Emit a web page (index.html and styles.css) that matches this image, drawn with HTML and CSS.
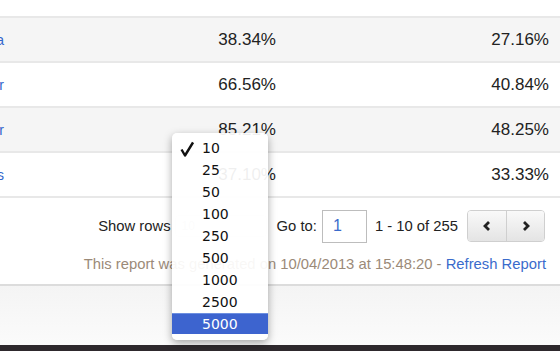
FILE: index.html
```html
<!DOCTYPE html>
<html lang="en">
<head>
    <meta charset="UTF-8">
    <title>Report</title>
    <link rel="stylesheet" href="styles.css">
</head>
<body>
    <div class="report">
        <div class="grid">
            <div class="row">
                <div class="name"><a href="#">Total</a></div>
                <div class="num">52.18%</div>
                <div class="num">31.07%</div>
            </div>
            <div class="row odd">
                <div class="name"><a href="#">Social Media</a></div>
                <div class="num">38.34%</div>
                <div class="num">27.16%</div>
            </div>
            <div class="row">
                <div class="name"><a href="#">Referrer</a></div>
                <div class="num">66.56%</div>
                <div class="num">40.84%</div>
            </div>
            <div class="row odd">
                <div class="name"><a href="#">Other</a></div>
                <div class="num">85.21%</div>
                <div class="num">48.25%</div>
            </div>
            <div class="row">
                <div class="name"><a href="#">Links</a></div>
                <div class="num">37.10%</div>
                <div class="num">33.33%</div>
            </div>
        </div>

        <div class="footer">
            <div class="controls">
                <span>Show rows</span>
                <span class="select">10</span>
                <span class="goto">Go to:</span>
                <input class="page-input" type="text" value="1">
                <span class="range">1 - 10 of 255</span>
                <div class="pager">
                    <button class="pager-btn"><svg width="10" height="12" viewBox="0 0 10 12"><polyline points="7,2 3,6 7,10" fill="none" stroke="#222" stroke-width="2.8"/></svg></button>
                    <button class="pager-btn"><svg width="10" height="12" viewBox="0 0 10 12"><polyline points="3,2 7,6 3,10" fill="none" stroke="#222" stroke-width="2.8"/></svg></button>
                </div>
            </div>
            <div class="generated">This report was generated on 10/04/2013 at 15:48:20 - <a href="#">Refresh Report</a></div>
        </div>
        <div class="bottom"></div>
        <div class="bar"></div>

        <ul class="menu">
            <li><svg class="check" width="14" height="16" viewBox="0 0 14 16"><polyline points="1.5,8.5 5,14.5 13,1.5" fill="none" stroke="#111" stroke-width="2.4" stroke-linejoin="round"/></svg>10</li>
            <li>25</li>
            <li>50</li>
            <li>100</li>
            <li>250</li>
            <li>500</li>
            <li>1000</li>
            <li>2500</li>
            <li class="active">5000</li>
        </ul>
    </div>
</body>
</html>
```

FILE: styles.css
```css
body {
    margin: 0;
    font-family: "Liberation Sans", Arial, sans-serif;
    color: #222;
    background: #fff;
    overflow: hidden;
}

.report {
    position: relative;
    height: 351px;
    overflow: hidden;
}

.grid {
    margin-top: -27px;
}

.row {
    display: grid;
    grid-template-columns: 4px 272px 273px;
    height: 43px;
    align-items: center;
    border-bottom: 2px solid #e8e8e8;
}

.row.odd {
    background-color: #f5f5f5;
}

.name {
    display: flex;
    justify-content: flex-end;
    white-space: nowrap;
    font-size: 14px;
}

.name a {
    color: #3366cc;
    text-decoration: none;
}

.num {
    text-align: right;
    font-size: 17px;
    color: #222;
}

.footer {
    display: flex;
    flex-direction: column;
    align-items: flex-end;
    padding: 12px 14px 12px 0;
    font-size: 14.8px;
    border-bottom: 2px solid #dcdcdc;
}

.controls {
    display: flex;
    align-items: center;
    height: 32px;
    margin-right: 1px;
}

.select {
    width: 92px;
    height: 22px;
    margin: 0 10px 0 4px;
    border: 1px solid #ececec;
    border-radius: 4px;
    color: #ccc;
    font-size: 12px;
    line-height: 20px;
    padding-left: 6px;
    box-sizing: border-box;
}

.goto {
    margin-right: 5px;
}

.page-input {
    width: 45px;
    height: 33px;
    box-sizing: border-box;
    border: 1px solid #bdbdbd;
    padding: 0 10px;
    font-family: "Liberation Sans", Arial, sans-serif;
    font-size: 16px;
    color: #3a6bcc;
    margin: 0;
}

.range {
    margin: 0 9px 0 8px;
}

.pager {
    display: flex;
    border: 1px solid #cfcfcf;
    border-radius: 4px;
    overflow: hidden;
    height: 32px;
    box-sizing: border-box;
}

.pager-btn {
    width: 38px;
    border: none;
    padding: 0;
    background: linear-gradient(#f9f9f9, #e4e4e4);
    display: flex;
    align-items: center;
    justify-content: center;
}

.pager-btn + .pager-btn {
    border-left: 1px solid #cfcfcf;
}

.generated {
    margin-top: 14px;
    color: #9b8a78;
    line-height: 16px;
}

.generated a {
    color: #3a6bcc;
    text-decoration: none;
}

.bottom {
    height: 59px;
    background: linear-gradient(#f4f4f4, #fbfbfb);
}

.bar {
    height: 6px;
    background-color: #2e292d;
}

.menu {
    position: absolute;
    left: 172px;
    top: 133px;
    width: 96px;
    margin: 0;
    padding: 4px 0 6px;
    list-style: none;
    background: rgba(255, 255, 255, 0.93);
    border-radius: 5px;
    box-shadow: 0 3px 8px rgba(0, 0, 0, 0.35);
    font-family: "DejaVu Sans", sans-serif;
    font-size: 14px;
    color: #111;
}

.menu li {
    position: relative;
    height: 22px;
    line-height: 22px;
    padding-left: 30px;
}

.check {
    position: absolute;
    left: 8px;
    top: 4px;
}

.menu li.active {
    background: #3d64cf;
    border-top: 1px solid #6d8fe0;
    height: 20px;
    line-height: 20px;
    color: #fff;
}
```
